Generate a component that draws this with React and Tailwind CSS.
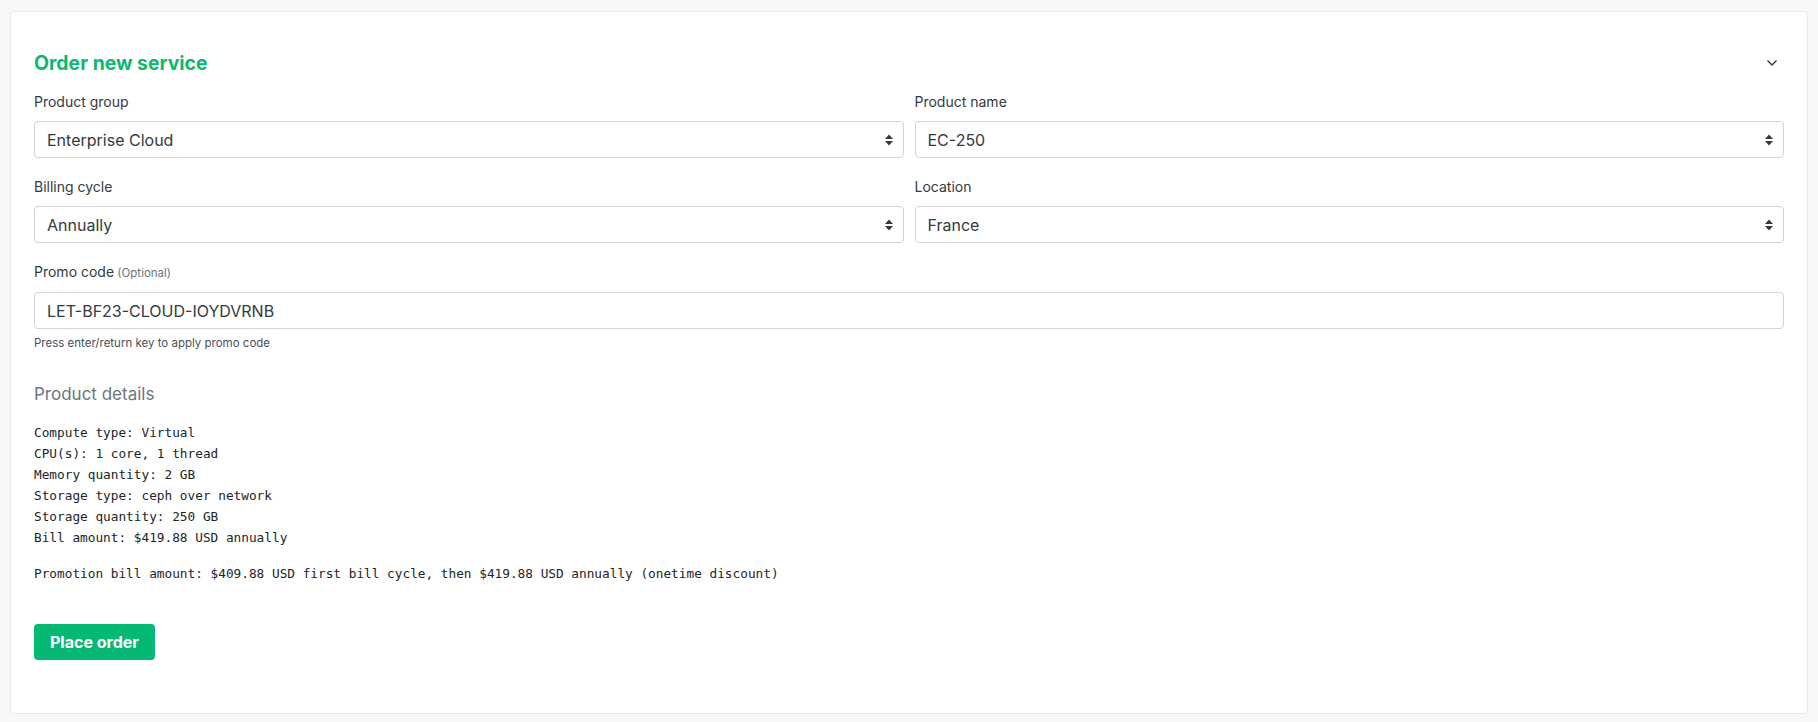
import React from 'react';

const sans = "font-['Inter','Noto_Sans',sans-serif]";

// Up/down caret drawn on the right of every select
const SelectCaret = () => (
  <svg width="10" height="12" viewBox="0 0 10 12" className="shrink-0">
    <path d="M5 0.5 L9 5 H1 Z" fill="#343a40" />
    <path d="M5 11.5 L9 7 H1 Z" fill="#343a40" />
  </svg>
);

const Field = ({ label, value, optional, select = true, hint }) => (
  <div className="flex flex-col">
    <label className="text-[14px] leading-[20px] text-[#343a40] mb-[9px]">
      {label}
      {optional && <span className="text-[11.5px] text-[#6c757d]"> (Optional)</span>}
    </label>
    <div className="h-[37px] rounded-[4px] border border-[#ced4da] bg-white flex items-center pl-[12px] pr-[9px]">
      <span className="flex-1 text-[16px] text-[#343a40]">{value}</span>
      {select && <SelectCaret />}
    </div>
    {hint && <p className="text-[11.5px] leading-[16px] text-[#495057] mt-[6px]">{hint}</p>}
  </div>
);

const details = [
  'Compute type: Virtual',
  'CPU(s): 1 core, 1 thread',
  'Memory quantity: 2 GB',
  'Storage type: ceph over network',
  'Storage quantity: 250 GB',
  'Bill amount: $419.88 USD annually',
];

export default function App() {
  return (
    <div className={`min-h-screen bg-[#f7f8fa] pt-[11px] px-[10px] pb-[10px] ${sans}`}>
      <div className="bg-white border border-[#e6e8eb] rounded-[4px] px-[23px] pt-[39px] pb-[53px]">
        <div className="flex items-center justify-between mb-[17px]">
          <h2 className="text-[19.4px] leading-[24px] font-bold text-[#0db86f]">Order new service</h2>
          <svg width="12" height="8" viewBox="0 0 12 8" className="mr-[6px]">
            <path d="M1.5 1.5 L6 6 L10.5 1.5" fill="none" stroke="#343a40" strokeWidth="1.4" />
          </svg>
        </div>

        <div className="grid grid-cols-2 gap-x-[11px] gap-y-[19px]">
          <Field label="Product group" value="Enterprise Cloud" />
          <Field label="Product name" value="EC-250" />
          <Field label="Billing cycle" value="Annually" />
          <Field label="Location" value="France" />
          <div className="col-span-2">
            <Field
              label="Promo code"
              optional
              select={false}
              value="LET-BF23-CLOUD-IOYDVRNB"
              hint="Press enter/return key to apply promo code"
            />
          </div>
        </div>

        <h3 className="mt-[31px] text-[17px] leading-[24px] text-[#6c757d]">Product details</h3>
        <div className="mt-[16px] font-['DejaVu_Sans_Mono',monospace] text-[12.75px] leading-[21px] text-[#212529]">
          {details.map((line) => (
            <div key={line}>{line}</div>
          ))}
          <div className="mt-[15px]">
            Promotion bill amount: $409.88 USD first bill cycle, then $419.88 USD annually (onetime discount)
          </div>
        </div>

        <button className="mt-[40px] h-[36px] px-[16px] rounded-[4px] bg-[#05b975] text-white text-[16px] font-bold">
          Place order
        </button>
      </div>
    </div>
  );
}
